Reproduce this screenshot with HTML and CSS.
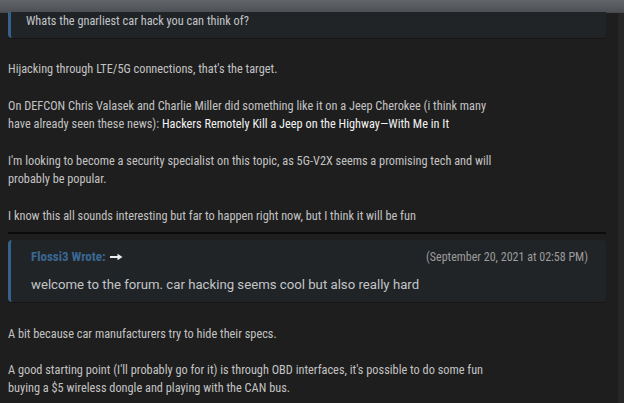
FILE: index.html
```html
<!DOCTYPE html>
<html lang="en">
<head>
<meta charset="utf-8">
<title>Forum post</title>
<link rel="stylesheet" href="styles.css">
</head>
<body>
<div class="topbar"></div>
<div class="layout">
  <main class="post">
    <blockquote class="quote quote-first">
      <p>Whats the gnarliest car hack you can think of?</p>
    </blockquote>
    <div class="post-text">
      <p>Hijacking through LTE/5G connections, that's the target.</p>
      <p>On DEFCON Chris Valasek and Charlie Miller did something like it on a Jeep Cherokee (i think many have already seen these news): <a class="link" href="#">Hackers Remotely Kill a Jeep on the Highway—With Me in It</a></p>
      <p>I'm looking to become a security specialist on this topic, as 5G-V2X seems a promising tech and will probably be popular.</p>
      <p>I know this all sounds interesting but far to happen right now, but I think it will be fun</p>
    </div>
    <hr class="sep">
    <blockquote class="quote quote-reply">
      <div class="quote-head">
        <span class="author">Flossi3 Wrote:
          <svg class="arrow" width="13" height="8" viewBox="0 0 13 8"><path d="M0 4H8.5" stroke="#ececec" stroke-width="2"/><path d="M7.5 0.8L12.5 4L7.5 7.2Z" fill="#ececec"/></svg>
        </span>
        <span class="date">(September 20, 2021 at 02:58 PM)</span>
      </div>
      <p>welcome to the forum. car hacking seems cool but also really hard</p>
    </blockquote>
    <div class="post-text post-text-after">
      <p>A bit because car manufacturers try to hide their specs.</p>
      <p>A good starting point (I'll probably go for it) is through OBD interfaces, it's possible to do some fun buying a $5 wireless dongle and playing with the CAN bus.</p>
    </div>
  </main>
  <div class="scroll-strip"></div>
</div>
</body>
</html>
```

FILE: styles.css
```css
* { box-sizing: border-box; }

html, body {
  margin: 0;
  padding: 0;
  height: 100%;
  overflow: hidden;
}

body {
  background: #1e1e1e;
  color: #c3c3c3;
  font-family: Roboto, "Noto Sans", "Liberation Sans", sans-serif;
  font-size: 13px;
  line-height: 18px;
}

.topbar {
  height: 13px;
  background: linear-gradient(#62666a, #4d5155);
  border-bottom: 1px solid #45494d;
}

.layout {
  display: flex;
  height: calc(100% - 13px);
}

.post {
  flex: 1;
  padding: 0 12px 0 8px;
}

.scroll-strip {
  width: 6px;
  background: #262626;
}

.quote {
  margin: 0;
  background: #212427;
  border-left: 3px solid #35628d;
  border-radius: 0 0 4px 4px;
  box-shadow: 0 1px 0 #161616;
}

.quote p { margin: 0; color: #c2c5c8; }

.quote-first {
  margin-top: -1px;
  padding: 0 12px 8px 15px;
}

.quote-first p {
  font-size: 12.3px;
  font-stretch: 80%;
}

.quote-reply {
  margin-top: 6px;
  border-radius: 4px;
  padding: 8px 18px 8px 20px;
}

.quote-reply p { font-size: 13.2px; }

.quote-head {
  display: flex;
  justify-content: space-between;
  align-items: center;
  margin-bottom: 10px;
}

.author {
  display: flex;
  align-items: center;
  gap: 4px;
  color: #3a6894;
  font-weight: 700;
  font-stretch: 80%;
}

.arrow { display: block; }

.date {
  color: #9c9c9c;
  font-size: 12px;
  font-stretch: 80%;
}

.post-text {
  max-width: 497px;
  padding-top: 22px;
  font-size: 12.3px;
  font-stretch: 80%;
}

.post-text p { margin: 0 0 19px; }
.post-text p:last-child { margin-bottom: 0; }

.post-text-after { padding-top: 23px; }
.post-text-after p { margin-bottom: 18px; }

.link {
  color: #f2f2f2;
  text-decoration: none;
}

.sep {
  margin: 7px 0 0;
  border: 0;
  height: 2px;
  background: #0b0b0b;
}
```
